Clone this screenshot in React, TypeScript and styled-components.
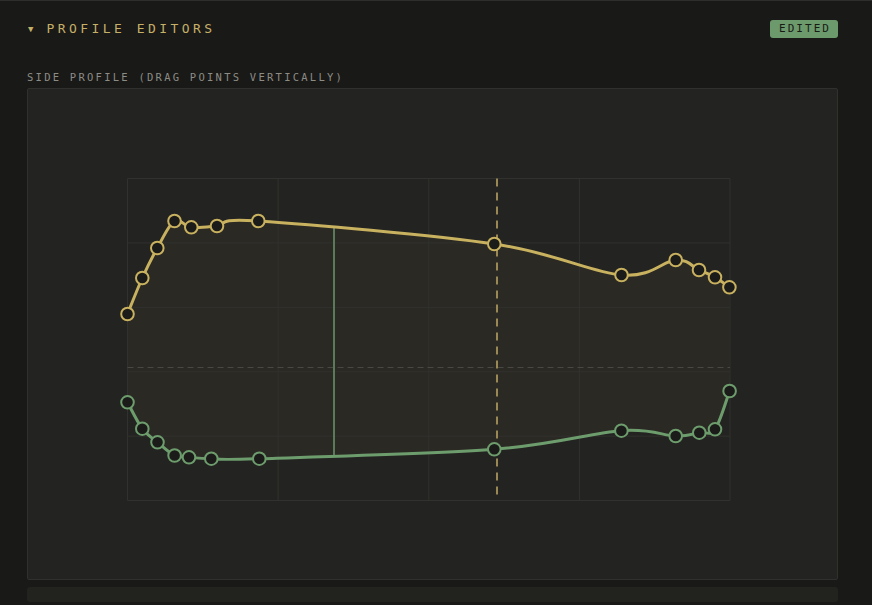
import styled, { createGlobalStyle } from "styled-components";
import { FunctionComponent } from "react";

const GlobalStyle = createGlobalStyle`
  html, body {
    margin: 0;
    padding: 0;
    background: #191918;
    overflow: hidden;
  }
  #root {
    min-height: 605px;
  }
`;

const Section = styled.section`
  border-top: 1px solid #2e2e2c;
  padding: 18px 34px 0 27px;
  font-family: "DejaVu Sans Mono", "Liberation Mono", monospace;
`;

const Header = styled.div`
  display: flex;
  align-items: center;
  justify-content: space-between;
  height: 19px;
  margin-bottom: 32px;
`;

const Title = styled.h2`
  margin: 0;
  display: flex;
  align-items: center;
  gap: 13px;
  color: #c6b067;
  font-size: 13px;
  font-weight: normal;
  letter-spacing: 3.45px;
  padding-left: 1px;
`;

const Caret = styled.span`
  font-size: 9px;
  letter-spacing: 0;
`;

const Badge = styled.span`
  background: #6d9a6c;
  color: #171a15;
  font-size: 11px;
  letter-spacing: 2.05px;
  line-height: 18px;
  height: 18px;
  padding: 0 7px 0 9px;
  border-radius: 3px;
`;

const Label = styled.div`
  color: #8d8c84;
  font-size: 10.5px;
  letter-spacing: 2.25px;
  line-height: 14px;
  margin-bottom: 4px;
`;

const Canvas = styled.div`
  height: 490px;
  background: #232321;
  border: 1px solid #30302d;
  border-radius: 2px;
  svg {
    display: block;
  }
`;

const Footer = styled.div`
  margin-top: 7px;
  height: 15px;
  background: #22221f;
  border-radius: 3px;
`;

type Pt = [number, number];

// page offset of the canvas interior
const OX = 28;
const OY = 89;

const gold: Pt[] = [
  [127.5, 314], [142.3, 278], [157.3, 248], [174.5, 221], [191.3, 227.3],
  [217, 226], [258.3, 221], [494.3, 244], [621.5, 275], [675.7, 260],
  [699, 270], [715, 277.3], [729.4, 287.3],
];

const green: Pt[] = [
  [127.5, 402.3], [142.3, 428.7], [157.5, 442.3], [174.6, 455.5], [189, 457.3],
  [211.3, 458.7], [259.3, 458.7], [494.3, 449.3], [621.4, 430.7], [675.7, 436],
  [699.3, 432.7], [715, 429.3], [729.6, 391],
];

type Seg = { a: Pt; c1: Pt; c2: Pt; b: Pt };

// uniform catmull-rom (cardinal, tension 0)
const cardinal = (pts: Pt[]): Seg[] => {
  const segs: Seg[] = [];
  for (let i = 0; i < pts.length - 1; i++) {
    const p0 = pts[Math.max(i - 1, 0)];
    const p1 = pts[i];
    const p2 = pts[i + 1];
    const p3 = pts[Math.min(i + 2, pts.length - 1)];
    segs.push({
      a: p1,
      c1: [p1[0] + (p2[0] - p0[0]) / 6, p1[1] + (p2[1] - p0[1]) / 6],
      c2: [p2[0] - (p3[0] - p1[0]) / 6, p2[1] - (p3[1] - p1[1]) / 6],
      b: p2,
    });
  }
  return segs;
};

const p = (pt: Pt) => `${(pt[0] - OX).toFixed(2)},${(pt[1] - OY).toFixed(2)}`;

const forward = (segs: Seg[]) => segs.map((g) => `C${p(g.c1)} ${p(g.c2)} ${p(g.b)}`).join(" ");
const backward = (segs: Seg[]) =>
  [...segs].reverse().map((g) => `C${p(g.c2)} ${p(g.c1)} ${p(g.a)}`).join(" ");

const goldSegs = cardinal(gold);
const greenSegs = cardinal(green);

const goldPath = `M${p(gold[0])} ${forward(goldSegs)}`;
const greenPath = `M${p(green[0])} ${forward(greenSegs)}`;
const fillPath = `M${p(gold[0])} ${forward(goldSegs)} L${p(green[green.length - 1])} ${backward(greenSegs)} Z`;

const PLOT = { x0: 127.5, x1: 730, y0: 178.5, y1: 500.5 };
const cols = [0, 1, 2, 3, 4].map((i) => PLOT.x0 + ((PLOT.x1 - PLOT.x0) * i) / 4);
const rows = [0, 1, 2, 3, 4, 5].map((i) => PLOT.y0 + ((PLOT.y1 - PLOT.y0) * i) / 5);

const GOLD = "#c8b15f";
const GREEN = "#6d9d6d";

const Points: FunctionComponent<{ pts: Pt[]; color: string }> = ({ pts, color }) => (
  <g>
    {pts.map((pt, i) => (
      <circle key={i} cx={pt[0] - OX} cy={pt[1] - OY} r={6.3} fill="#1b1b19" stroke={color} strokeWidth={2} />
    ))}
  </g>
);

const ProfileChart: FunctionComponent = () => (
  <svg width="100%" height="100%" viewBox="0 0 809 490">
    <path d={fillPath} fill="#2b2924" />
    {cols.map((x, i) => (
      <line key={`c${i}`} x1={x - OX} x2={x - OX} y1={PLOT.y0 - OY} y2={PLOT.y1 - OY} stroke="#31312e" strokeWidth={1} />
    ))}
    {rows.map((y, i) => (
      <line key={`r${i}`} x1={PLOT.x0 - OX} x2={PLOT.x1 - OX} y1={y - OY} y2={y - OY} stroke="#31312e" strokeWidth={1} />
    ))}
    <line x1={PLOT.x0 - OX} x2={PLOT.x1 - OX} y1={367.5 - OY} y2={367.5 - OY} stroke="#4a4843" strokeWidth={1} strokeDasharray="6 4" />
    <line x1={497 - OX} x2={497 - OX} y1={PLOT.y0 - OY} y2={PLOT.y1 - OY} stroke="#9a8954" strokeWidth={2} strokeDasharray="8 6" />
    <line x1={334 - OX} x2={334 - OX} y1={227 - OY} y2={456 - OY} stroke="#5b7a5a" strokeWidth={2} />
    <path d={goldPath} fill="none" stroke={GOLD} strokeWidth={3} strokeLinejoin="round" />
    <path d={greenPath} fill="none" stroke={GREEN} strokeWidth={3} strokeLinejoin="round" />
    <Points pts={gold} color={GOLD} />
    <Points pts={green} color={GREEN} />
  </svg>
);

const App: FunctionComponent = () => (
  <>
    <GlobalStyle />
    <Section>
      <Header>
        <Title>
          <Caret>▼</Caret>
          PROFILE EDITORS
        </Title>
        <Badge>EDITED</Badge>
      </Header>
      <Label>SIDE PROFILE (DRAG POINTS VERTICALLY)</Label>
      <Canvas>
        <ProfileChart />
      </Canvas>
      <Footer />
    </Section>
  </>
);

export default App;
